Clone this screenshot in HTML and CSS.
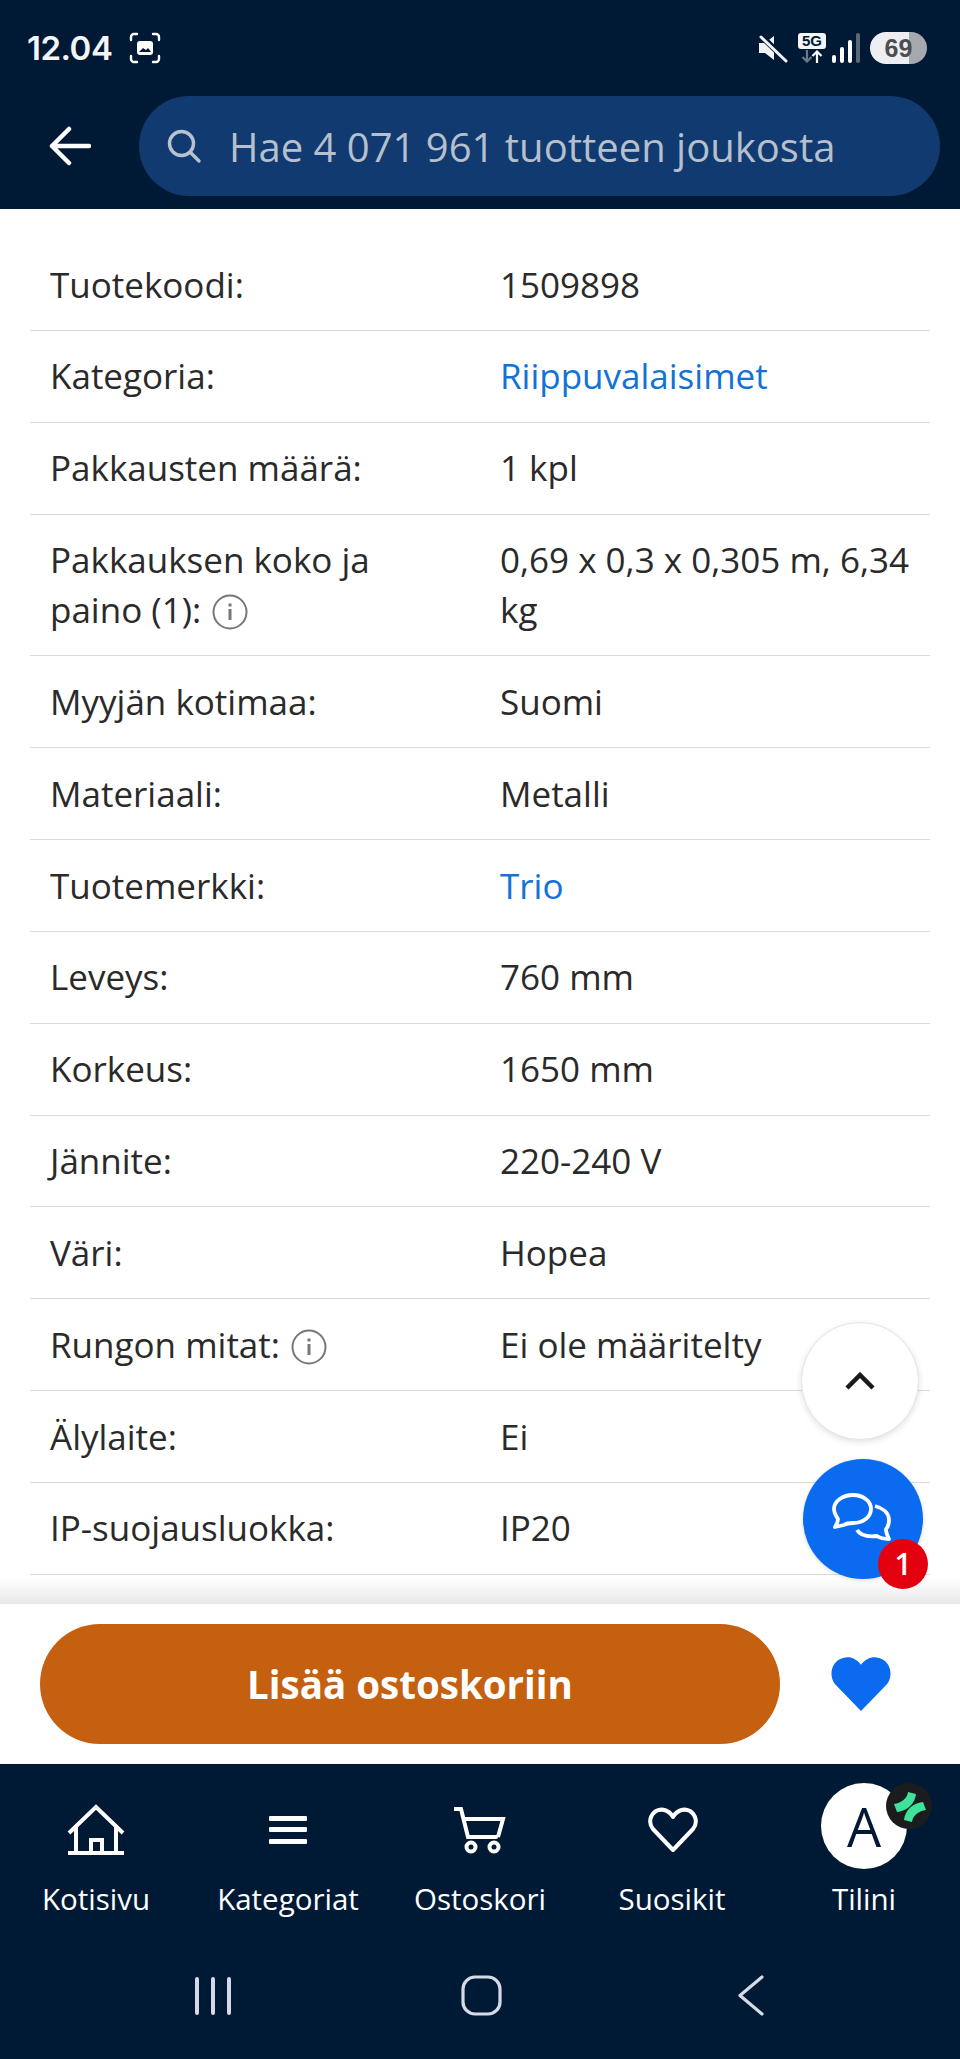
FILE: index.html
```html
<!DOCTYPE html>
<html>
<head>
    <meta charset="UTF-8">
    <title>Tuotetiedot</title>
    <link rel="stylesheet" href="styles.css">
</head>
<body>
<div class="screen">
    <header class="top">
        <div class="status">
            <span class="clock">12.04</span>
            <svg class="shot" width="32" height="32" viewBox="0 0 32 32" fill="none" stroke="#fff" stroke-width="2.4" stroke-linecap="round">
                <path d="M2 8V5a3 3 0 0 1 3-3h3M24 2h3a3 3 0 0 1 3 3v3M30 24v3a3 3 0 0 1-3 3h-3M8 30H5a3 3 0 0 1-3-3v-3"/>
                <rect x="8" y="9" width="16" height="14" rx="3" fill="#fff" stroke="none"/>
                <path d="M10 20l4-4 3 2 2-2 3 4z" fill="#001a36" stroke="none"/>
            </svg>
            <div class="status-right">
                <svg width="30" height="30" viewBox="0 0 30 30">
                    <path d="M1 10h6l9-7v24l-9-7H1z" fill="#f2f3f5"/>
                    <path d="M3 3l26 25" stroke="#001a36" stroke-width="6"/>
                    <path d="M3 4l25 24" stroke="#f2f3f5" stroke-width="3" stroke-linecap="round"/>
                </svg>
                <div class="net">
                    <span class="net-5g">5G</span>
                    <svg width="22" height="13" viewBox="0 0 22 13" fill="none" stroke-width="2.2">
                        <path d="M6 0v11M1.500 7l4.500 4.500L10.500 7" stroke="#6d7886"/>
                        <path d="M16 13V2M11.500 6L16 1.500 20.500 6" stroke="#fff"/>
                    </svg>
                </div>
                <svg class="bars" width="28" height="32" viewBox="0 0 28 32">
                    <rect x="0" y="23" width="4" height="8" rx="2" fill="#fff"/>
                    <rect x="8" y="15" width="4" height="16" rx="2" fill="#fff"/>
                    <rect x="16" y="8" width="4" height="23" rx="2" fill="#fff"/>
                    <rect x="24" y="1" width="4" height="30" rx="2" fill="#5b6878"/>
                </svg>
                <div class="battery"><span>69</span></div>
            </div>
        </div>
        <div class="searchbar">
            <svg class="back" width="42" height="40" viewBox="0 0 42 40" fill="none" stroke="#fff" stroke-width="4.500" stroke-linecap="round" stroke-linejoin="round">
                <path d="M3 20h37M20 3L3 20l17 17"/>
            </svg>
            <div class="search">
                <svg width="36" height="36" viewBox="0 0 36 36" fill="none" stroke="#b9c3d0" stroke-width="3.400" stroke-linecap="round">
                    <circle cx="15.500" cy="15.500" r="12"/>
                    <path d="M24 24l9 9"/>
                </svg>
                <span class="search-text">Hae 4 071 961 tuotteen joukosta</span>
            </div>
        </div>
    </header>

    <main class="content">
        <div class="specs">
            <div class="row"><div>Tuotekoodi:</div><div>1509898</div></div>
            <div class="row"><div>Kategoria:</div><div><a class="link">Riippuvalaisimet</a></div></div>
            <div class="row"><div>Pakkausten määrä:</div><div>1 kpl</div></div>
            <div class="row"><div>Pakkauksen koko ja paino (1):<svg class="info" viewBox="0 0 36 36" fill="none"><circle cx="18" cy="18" r="16.500" stroke="#777" stroke-width="2"/><rect x="16.500" y="15" width="3" height="11" fill="#777"/><rect x="16.500" y="9.500" width="3" height="3" fill="#777"/></svg></div><div>0,69 x 0,3 x 0,305 m, 6,34 kg</div></div>
            <div class="row"><div>Myyjän kotimaa:</div><div>Suomi</div></div>
            <div class="row"><div>Materiaali:</div><div>Metalli</div></div>
            <div class="row"><div>Tuotemerkki:</div><div><a class="link">Trio</a></div></div>
            <div class="row"><div>Leveys:</div><div>760 mm</div></div>
            <div class="row"><div>Korkeus:</div><div>1650 mm</div></div>
            <div class="row"><div>Jännite:</div><div>220-240 V</div></div>
            <div class="row"><div>Väri:</div><div>Hopea</div></div>
            <div class="row"><div>Rungon mitat:<svg class="info" viewBox="0 0 36 36" fill="none"><circle cx="18" cy="18" r="16.500" stroke="#777" stroke-width="2"/><rect x="16.500" y="15" width="3" height="11" fill="#777"/><rect x="16.500" y="9.500" width="3" height="3" fill="#777"/></svg></div><div>Ei ole määritelty</div></div>
            <div class="row"><div>Älylaite:</div><div>Ei</div></div>
            <div class="row"><div>IP-suojausluokka:</div><div>IP20</div></div>
        </div>
        <div class="fade"></div>
    </main>

    <div class="buybar">
        <button class="buy">Lisää ostoskoriin</button>
        <svg class="fav" width="60" height="56" viewBox="0 0 62 56">
            <path d="M31 56L4 28C-2 20 0 8 8 3c8-5 17-3 23 5 6-8 15-10 23-5 8 5 10 17 4 25z" fill="#0a6af0"/>
        </svg>
    </div>

    <nav class="nav">
        <div class="tabs">
            <div class="tab">
                <div class="tab-icon">
                    <svg class="line-icon" width="58" height="52" viewBox="0 0 58 52" fill="none" stroke="#fff" stroke-width="4">
                        <path d="M2 29L29 3l27 26"/>
                        <path d="M9 23v26M49 23v26M1 49h56"/>
                        <path d="M24 49V36h11v13"/>
                    </svg>
                </div>
                <span>Kotisivu</span>
            </div>
            <div class="tab">
                <div class="tab-icon">
                    <svg class="line-icon" width="38" height="30" viewBox="0 0 38 30" fill="#fff">
                        <rect x="0" y="1" width="38" height="5" rx="1"/>
                        <rect x="0" y="12" width="38" height="5" rx="1"/>
                        <rect x="0" y="24" width="38" height="5" rx="1"/>
                    </svg>
                </div>
                <span>Kategoriat</span>
            </div>
            <div class="tab">
                <div class="tab-icon">
                    <svg class="line-icon" width="52" height="48" viewBox="0 0 52 48" fill="none" stroke="#fff" stroke-width="4">
                        <path d="M1 3h6l7 28h28" stroke-linecap="round"/>
                        <path d="M10 13h39l-5 18"/>
                        <circle cx="17" cy="41" r="4.500"/>
                        <circle cx="40" cy="41" r="4.500"/>
                    </svg>
                </div>
                <span>Ostoskori</span>
            </div>
            <div class="tab">
                <div class="tab-icon">
                    <svg class="line-icon heart-icon" width="50" height="46" viewBox="0 0 50 46" fill="none" stroke="#fff" stroke-width="4">
                        <path d="M25 43L5 22C0 16 2 8 8 4c6-3 13-1 17 6 4-7 11-9 17-6 6 4 8 12 3 18z" stroke-linejoin="round"/>
                    </svg>
                </div>
                <span>Suosikit</span>
            </div>
            <div class="tab">
                <div class="tab-icon">
                    <div class="avatar">A</div>
                    <svg class="avatar-badge" width="46" height="46" viewBox="0 0 46 46">
                        <circle cx="23" cy="23" r="23" fill="#1a1c1e"/>
                        <path d="M22 9L30 11C29 20 22 28 11 29L8 21C15 20 21 16 22 9z" fill="#3fe29a"/>
                        <path d="M26 39L18 37C19 28 26 20 37 19L40 27C33 28 27 32 26 39z" fill="#3fe29a"/>
                    </svg>
                </div>
                <span>Tilini</span>
            </div>
        </div>
        <div class="sysbar">
            <svg width="36" height="40" viewBox="0 0 36 40" fill="none" stroke="#d5dbe6" stroke-width="4" stroke-linecap="round">
                <path d="M2 3v34M18 3v34M34 3v34"/>
            </svg>
            <svg class="sys-home" width="41" height="41" viewBox="0 0 41 41" fill="none" stroke="#d5dbe6" stroke-width="3.200">
                <rect x="2" y="2" width="37" height="37" rx="12"/>
            </svg>
            <svg class="sys-back" width="26" height="41" viewBox="0 0 26 41" fill="none" stroke="#d5dbe6" stroke-width="3.200" stroke-linecap="round" stroke-linejoin="round">
                <path d="M24 2L2 20.500 24 39"/>
            </svg>
        </div>
    </nav>

    <div class="fab fab-up">
        <svg width="30" height="18" viewBox="0 0 30 18" fill="none" stroke="#1a1a1a" stroke-width="4.500">
            <path d="M2 16L15 3l13 13"/>
        </svg>
    </div>
    <div class="fab fab-chat">
        <svg width="62" height="52" viewBox="0 0 62 52" fill="none" stroke="#fff" stroke-width="3.800" stroke-linejoin="round">
            <path d="M21 2c10 0 18 6 18 14s-8 14-18 14c-3 0-6 0-9 2l-9 2c2-3 3-5 3-8-2-3-4-6-4-10C2 8 11 2 21 2z"/>
            <path d="M43 13c8 2 14 7 14 14 0 4-1 7-3 9 0 3 1 6 3 10-5 0-9-1-12-3-9 1-17-1-20-6"/>
        </svg>
        <span class="chat-count">1</span>
    </div>
</div>
</body>
</html>
```
FILE: styles.css
```css
* {
    margin: 0;
    padding: 0;
    box-sizing: border-box;
}
body {
    font-family: "Open Sans", "Liberation Sans", sans-serif;
    color: #2a2a2a;
    background-color: #fff;
}
.screen {
    position: relative;
    width: 960px;
    height: 2059px;
    display: flex;
    flex-direction: column;
    overflow: hidden;
}

/* header */
.top {
    height: 209px;
    background-color: #001a36;
}
.status {
    height: 96px;
    padding: 0 33px 0 27px;
    display: flex;
    align-items: center;
}
.clock {
    font-family: Inter, "Liberation Sans", sans-serif;
    font-size: 33px;
    font-weight: 600;
    letter-spacing: -0.5px;
    color: #f4f5f7;
}
.shot {
    margin-left: 17px;
}
.status-right {
    margin-left: auto;
    display: flex;
    align-items: center;
}
.net {
    width: 30px;
    margin-left: 9px;
    display: flex;
    flex-direction: column;
    align-items: center;
    gap: 1px;
}
.net-5g {
    width: 28px;
    height: 16px;
    background-color: #f4f5f7;
    border-radius: 3px;
    color: #001a36;
    font-family: "Liberation Sans", sans-serif;
    font-size: 15px;
    font-weight: 700;
    line-height: 16px;
    text-align: center;
}
.bars {
    margin-left: 5px;
}
.battery {
    width: 57px;
    height: 32px;
    margin-left: 10px;
    border-radius: 16px;
    background: linear-gradient(to right, #eceef1 68%, #a5a8ad 68%);
    color: #4c4d50;
    font-family: "Liberation Sans", sans-serif;
    font-size: 25px;
    font-weight: 700;
    line-height: 32px;
    text-align: center;
}
.searchbar {
    display: flex;
    align-items: center;
    padding-left: 49px;
}
.back {
    flex: none;
}
.search {
    width: 801px;
    height: 100px;
    margin-left: 48px;
    padding-left: 27px;
    background-color: #103a70;
    border-radius: 50px;
    display: flex;
    align-items: center;
}
.search-text {
    margin-left: 27px;
    color: #b5bfcd;
    font-size: 40px;
}

/* spec table */
.content {
    position: relative;
    flex: 1;
    overflow: hidden;
    padding: 30px 30px 0;
}
.row {
    display: grid;
    grid-template-columns: 450px 1fr;
    padding: 20.5px 20px 20.35px;
    border-bottom: 1px solid #d9d9d9;
    font-size: 35px;
    line-height: 50px;
}
.row > div:first-child {
    padding-right: 40px;
}
.link {
    color: #1272d6;
}
.info {
    width: 36px;
    height: 36px;
    margin-left: 11px;
    vertical-align: -7px;
}
.fade {
    position: absolute;
    left: 0;
    right: 0;
    bottom: 0;
    height: 26px;
    background: linear-gradient(to bottom, rgba(235, 235, 235, 0), #e8e8e8);
}

/* buy bar */
.buybar {
    height: 160px;
    padding: 0 69px 0 40px;
    background-color: #fff;
    display: flex;
    align-items: center;
    justify-content: space-between;
}
.buy {
    width: 740px;
    height: 120px;
    border: none;
    border-radius: 60px;
    background-color: #c46010;
    color: #fff;
    font-family: "Open Sans", "Liberation Sans", sans-serif;
    font-size: 38.5px;
    font-weight: 700;
}

/* bottom nav */
.nav {
    height: 295px;
    background-color: #001a36;
}
.tabs {
    display: flex;
    padding-top: 19px;
}
.tab {
    flex: 1;
    display: flex;
    flex-direction: column;
    align-items: center;
    color: #fff;
    font-size: 29.5px;
    line-height: 40px;
}
.tab-icon {
    position: relative;
    height: 86px;
    margin-bottom: 10px;
    display: flex;
    align-items: center;
    justify-content: center;
}
.line-icon {
    margin-top: 8px;
}
.heart-icon {
    margin-left: 2px;
}
.avatar {
    width: 86px;
    height: 86px;
    border-radius: 50%;
    background-color: #fff;
    color: #001a36;
    font-size: 54px;
    line-height: 86px;
    text-align: center;
}
.avatar-badge {
    position: absolute;
    top: 0;
    left: 65px;
}
.sysbar {
    display: flex;
    align-items: center;
    padding-left: 195px;
    margin-top: 56px;
}
.sys-home {
    margin-left: 230px;
}
.sys-back {
    margin-left: 236px;
}

/* round buttons */
.fab {
    position: absolute;
    border-radius: 50%;
    display: flex;
    align-items: center;
    justify-content: center;
}
.fab-up {
    left: 801px;
    top: 1322px;
    width: 118px;
    height: 118px;
    background-color: #fff;
    border: 1px solid #e4e4e4;
    box-shadow: 0 2px 6px rgba(0, 0, 0, 0.12);
}
.fab-chat {
    left: 803px;
    top: 1459px;
    width: 120px;
    height: 120px;
    background-color: #0a6af0;
    box-shadow: 0 1px 4px rgba(0, 0, 0, 0.15);
}
.chat-count {
    position: absolute;
    left: 75px;
    top: 80px;
    width: 50px;
    height: 50px;
    border-radius: 50%;
    background-color: #e3000f;
    color: #fff;
    font-size: 30px;
    font-weight: 600;
    line-height: 50px;
    text-align: center;
}
```
